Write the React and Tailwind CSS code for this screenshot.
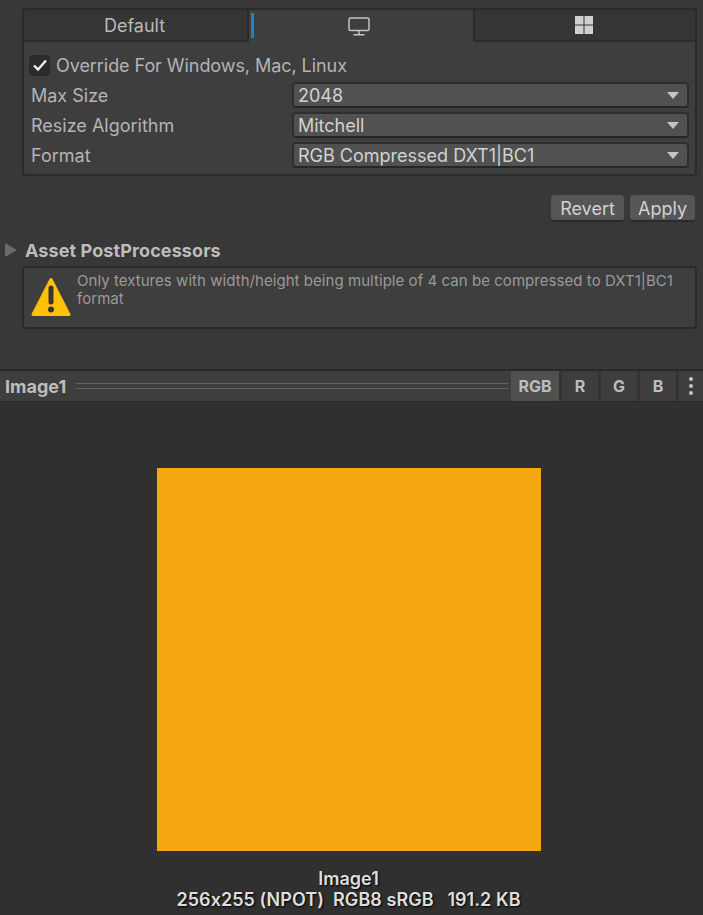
import React from "react";

// Unity texture importer inspector, platform override + image preview
function DropRow({ label, value }) {
  return (
    <div className="flex h-[30px] items-center">
      <div className="w-[268px] pl-[7px] text-[18px] text-[#b4b4b4]">{label}</div>
      <div className="flex h-[26px] w-[397px] items-center justify-between rounded-[4px] border-2 border-[#2e2e2e] border-b-[#262626] bg-[#515151] pl-[4px] pr-[8px] text-[18px] text-[#d2d2d2]">
        <span>{value}</span>
        <svg width="12" height="7" viewBox="0 0 12 7">
          <path d="M0 0H12L6 7Z" fill="#c4c4c4" />
        </svg>
      </div>
    </div>
  );
}

function ToolButton({ children, active, className }) {
  return (
    <div
      className={`flex h-full items-center justify-center font-bold text-[#bdbdbd] ${
        active ? "bg-[#505050]" : "bg-[#3e3e3e]"
      } ${className}`}
    >
      {children}
    </div>
  );
}

export default function App() {
  return (
    <div
      className="flex h-[915px] w-[703px] flex-col overflow-hidden bg-[#383838]"
      style={{ fontFamily: "Inter, sans-serif" }}
    >
      <div className="h-[369px] shrink-0 pt-[8px]">
        {/* platform panel */}
        <div className="mx-[22px] h-[168px] w-[675px] overflow-hidden rounded-[4px] border-2 border-[#2a2a2a] bg-[#3e3e3e]">
          <div className="flex h-[32px]">
            <div className="flex w-[225px] items-center justify-center border-r-2 border-b-2 border-[#2a2a2a] bg-[#353535] pr-[2px] text-[18px] text-[#b9b9b9]">
              Default
            </div>
            <div className="relative flex w-[224px] items-center justify-center pr-[4px]">
              <div className="absolute top-[3px] bottom-[4px] left-[2px] w-[3px] bg-[#1b84c4]" />
              <svg width="22" height="19" viewBox="0 0 22 19" fill="none" stroke="#c4c4c4" strokeWidth="1.5">
                <rect x="1" y="1" width="20" height="12.5" rx="1.5" />
                <path d="M11 13.5V17.5M5.5 17.75H16.5" />
              </svg>
            </div>
            <div className="flex flex-1 items-center justify-center border-b-2 border-l-2 border-[#2a2a2a] bg-[#353535] pr-[2px]">
              <svg width="18" height="18" viewBox="0 0 18 18" fill="#d0d0d0">
                <rect x="0" y="0" width="8.5" height="8.5" />
                <rect x="9.5" y="0" width="8.5" height="8.5" />
                <rect x="0" y="9.5" width="8.5" height="8.5" />
                <rect x="9.5" y="9.5" width="8.5" height="8.5" />
              </svg>
            </div>
          </div>
          <div className="flex h-[38px] items-center pt-[8px] pl-[5px]">
            <div className="flex h-[21px] w-[21px] items-center justify-center rounded-[4px] border border-[#2a2a2a] bg-[#2b2b2b]">
              <svg width="14" height="12" viewBox="0 0 14 12" fill="none" stroke="#f0f0f0" strokeWidth="2.4">
                <path d="M1 6.5L5 10.5L13 1.5" />
              </svg>
            </div>
            <span className="ml-[6px] text-[18px] tracking-[-0.06px] text-[#b4b4b4]">Override For Windows, Mac, Linux</span>
          </div>
          <DropRow label="Max Size" value="2048" />
          <DropRow label="Resize Algorithm" value="Mitchell" />
          <DropRow label="Format" value="RGB Compressed DXT1|BC1" />
        </div>

        <div className="mt-[19px] flex justify-end gap-[6px] pr-[8px]">
          <div className="flex h-[27px] w-[73px] items-center justify-center rounded-[4px] border-b-2 border-[#2a2a2a] bg-[#565656] pt-[2px] text-[18px] text-[#d2d2d2]">
            Revert
          </div>
          <div className="flex h-[27px] w-[65px] items-center justify-center rounded-[4px] border-b-2 border-[#2a2a2a] bg-[#565656] pt-[2px] text-[18px] text-[#d2d2d2]">
            Apply
          </div>
        </div>

        <div className="mt-[16px] flex h-[24px] items-center pl-[5px]">
          <svg width="12" height="14" viewBox="0 0 12 14">
            <path d="M0 0L12 7L0 14Z" fill="#6b6b6b" />
          </svg>
          <span className="ml-[8px] text-[18px] font-bold tracking-[0.1px] text-[#bdbdbd]">Asset PostProcessors</span>
        </div>

        {/* warning box */}
        <div className="mx-[22px] mt-[4px] flex h-[63px] w-[675px] rounded-[4px] border-2 border-[#2a2a2a] bg-[#3e3e3e]">
          <svg className="mt-[9px] ml-[7px] shrink-0" width="40" height="40" viewBox="0 0 40 40">
            <path d="M20 2.5L38 37.5H2Z" fill="#ffc107" stroke="#ffc107" strokeWidth="3" strokeLinejoin="round" />
            <path d="M20 11V25" stroke="#353535" strokeWidth="5" strokeLinecap="round" />
            <circle cx="20" cy="32.5" r="3" fill="#353535" />
          </svg>
          <div className="ml-[6px] pt-[4px] text-[15px] leading-[18px] tracking-[0.05px] whitespace-nowrap text-[#9a9a9a]">
            Only textures with width/height being multiple of 4 can be compressed to DXT1|BC1
            <br />
            format
          </div>
        </div>
      </div>

      {/* preview toolbar */}
      <div className="flex h-[33px] shrink-0 items-center border-t-2 border-b border-[#2a2a2a] bg-[#3e3e3e]">
        <span className="ml-[5px] text-[18px] font-bold text-[#bdbdbd]">Image1</span>
        <div className="ml-[10px] flex h-[6px] flex-1 flex-col justify-between border-y border-[#636363]" />
        <div className="ml-[3px] flex h-full gap-[3px] bg-[#333333] text-[16px]">
          <ToolButton active className="w-[48px]">RGB</ToolButton>
          <ToolButton className="w-[36px]">R</ToolButton>
          <ToolButton className="w-[36px]">G</ToolButton>
          <ToolButton className="w-[36px]">B</ToolButton>
          <ToolButton className="w-[24px] flex-col gap-[3px]">
            <span className="h-[4px] w-[4px] rounded-full bg-[#c4c4c4]" />
            <span className="h-[4px] w-[4px] rounded-full bg-[#c4c4c4]" />
            <span className="h-[4px] w-[4px] rounded-full bg-[#c4c4c4]" />
          </ToolButton>
        </div>
      </div>

      {/* preview */}
      <div className="flex flex-1 flex-col items-center bg-[#303030] pt-[66px] pr-[6px]">
        <div className="h-[383px] w-[384px] bg-[#f5a711]" />
        <div className="mt-[17px] text-center text-[18px] leading-[21px] font-semibold tracking-[0.05px] text-[#dedede] [font-feature-settings:'calt'_0] [text-shadow:1px_1px_2px_#000]">
          <div>Image1</div>
          <div className="whitespace-pre">256x255 (NPOT)  RGB8 sRGB   191.2 KB</div>
        </div>
      </div>
    </div>
  );
}
